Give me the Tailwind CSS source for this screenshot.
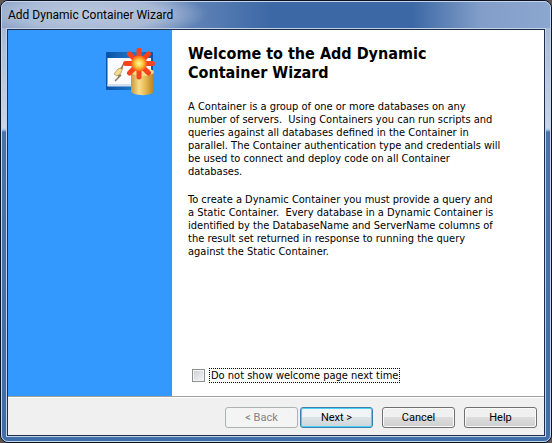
<!DOCTYPE html>
<html lang="en">
<head>
    <meta charset="UTF-8">
    <meta name="viewport" content="width=device-width, initial-scale=1.0">
    <title>Add Dynamic Container Wizard</title>
    <script src="https://cdn.jsdelivr.net/npm/@tailwindcss/browser@4"></script>
</head>
<body class="bg-[#5c5552]">
    <div class="h-screen flex flex-col rounded-lg border border-[#0b1222] bg-[linear-gradient(to_bottom,#9fb2d0_0px,#c9d6e8_127px,#9fc0e4_129px,#4a72aa_131px,#3f6da8_100%)] text-black font-['DejaVu_Sans_Condensed','DejaVu_Sans',sans-serif]">
        <div class="grow flex flex-col rounded-[7px] border border-[#c6d5ea]">

            <!-- Title bar -->
            <header class="h-[26px] shrink-0 flex items-center rounded-t-md px-1.5 bg-[radial-gradient(ellipse_120px_26px_at_85px_12px,#b9c7de_0%,#a9bad6_60%,transparent_100%),linear-gradient(to_right,#7e97bf_0px,#8099c2_130px,#5b80b5_200px,#3c68a5_270px,#3c68a5_410px,#839fc9_480px,#8ba6cf_100%)]">
                <h1 class="text-[12px] leading-4 font-[Roboto,sans-serif]">Add Dynamic Container Wizard</h1>
            </header>

            <main class="grow mx-1 mb-1 flex flex-col border border-[#c3d2e6]">
                <div class="grow flex flex-col border border-[#1b2c4c] bg-[#f0f0f0]">
                    <div class="grow flex border-b border-[#a0a0a0]">
                        <div class="w-[164px] shrink-0 bg-[#3399ff] flex justify-end items-start pt-[18px] pr-4">
                            <svg class="w-[50px] h-[50px]" viewBox="0 0 50 50" aria-hidden="true">
                                <defs>
                                    <linearGradient id="bar" x1="0" y1="0" x2="1" y2="0">
                                        <stop offset="0" stop-color="#0753a8"/>
                                        <stop offset="0.7" stop-color="#267dcd"/>
                                        <stop offset="1" stop-color="#0753a8"/>
                                    </linearGradient>
                                    <linearGradient id="can" x1="0" y1="0" x2="1" y2="0">
                                        <stop offset="0" stop-color="#c9973a"/>
                                        <stop offset="0.35" stop-color="#f9dd8c"/>
                                        <stop offset="0.6" stop-color="#e8bd58"/>
                                        <stop offset="1" stop-color="#b67f1e"/>
                                    </linearGradient>
                                    <radialGradient id="core">
                                        <stop offset="0" stop-color="#fffba0"/>
                                        <stop offset="0.5" stop-color="#ffc93a"/>
                                        <stop offset="1" stop-color="#fa5a16"/>
                                    </radialGradient>
                                </defs>
                                <rect x="0" y="4" width="47" height="38" rx="1" fill="url(#bar)"/>
                                <path d="M1.500 10H45V38H1.500Z" fill="#fafbff"/>
                                <path d="M1.500 36H26V38.500H1.500Z" fill="#d5def0"/>
                                <path d="M12 21L17 19L15 25L11 28L8 26Z" fill="#f3dc9a" stroke="#c9a766" stroke-width="1"/>
                                <path d="M18 15L15 21M12 28L15 27L9 33" fill="none" stroke="#8c7a5c" stroke-width="1.500"/>
                                <path d="M25 24V43C25 48.500 48 48.500 48 43V24Z" fill="url(#can)"/>
                                <ellipse cx="36.500" cy="24" rx="11.500" ry="4" fill="#f9dc8c"/>
                                <g stroke="#f8421c" stroke-width="5" stroke-linecap="round">
                                    <path d="M33 2V29M19.500 15.500H46.500M23.500 6L42.500 25M42.500 6L23.500 25"/>
                                </g>
                                <circle cx="33" cy="15.500" r="8" fill="url(#core)"/>
                            </svg>
                        </div>

                        <div class="grow flex flex-col bg-white pl-4 pr-10 pt-3.5">
                            <h2 class="text-[16px] leading-[19px] font-bold">Welcome to the Add Dynamic<br>Container Wizard</h2>
                            <div class="mt-[18px] flex flex-col gap-[15px] text-[11px] leading-[13px] whitespace-nowrap">
                                <p>A Container is a group of one or more databases on any<br>
                                number of servers.&nbsp; Using Containers you can run scripts and<br>
                                queries against all databases defined in the Container in<br>
                                parallel. The Container authentication type and credentials will<br>
                                be used to connect and deploy code on all Container<br>
                                databases.</p>
                                <p>To create a Dynamic Container you must provide a query and<br>
                                a Static Container.&nbsp; Every database in a Dynamic Container is<br>
                                identified by the DatabaseName and ServerName columns of<br>
                                the result set returned in response to running the query<br>
                                against the Static Container.</p>
                            </div>
                            <div class="mt-auto mb-[13px] ml-1 flex items-center gap-1 text-[11px]">
                                <input id="skipWelcome" type="checkbox" class="appearance-none size-[13px] shrink-0 border border-[#8e8f8f] bg-linear-to-br from-[#cbcfd5] to-[#f6f6f6] outline outline-[#f4f4f4] -outline-offset-2 checked:bg-[#4a72aa]">
                                <label for="skipWelcome" class="border border-dotted border-black px-px leading-[13px] whitespace-nowrap">Do not show welcome page next time</label>
                            </div>
                        </div>
                    </div>

                    <!-- Wizard buttons -->
                    <footer class="h-[38px] shrink-0 flex items-center justify-end gap-[9px] border-t border-white pr-[7px] pb-0.5 pt-1 text-[11px] font-[Roboto,sans-serif]">
                        <div class="flex gap-0.5">
                            <button type="button" disabled class="w-[73px] h-[21px] rounded-[3px] border border-[#adb2b5] bg-[#f4f4f4] text-[#838383] leading-4">&lt; Back</button>
                            <button type="button" class="w-[73px] h-[21px] rounded-[3px] border border-[#3c7fb1] bg-linear-to-b from-[#f0f4f6] from-45% via-[#dce4e8] via-50% to-[#cfd6da] inset-ring inset-ring-[#48d0f5] leading-4">Next &gt;</button>
                        </div>
                        <button type="button" class="w-[73px] h-[21px] rounded-[3px] border border-[#707070] bg-linear-to-b from-[#f0f0f0] from-45% via-[#dddddd] via-50% to-[#cfcfcf] inset-ring inset-ring-[#fafafa] leading-4">Cancel</button>
                        <button type="button" class="w-[73px] h-[21px] rounded-[3px] border border-[#707070] bg-linear-to-b from-[#f0f0f0] from-45% via-[#dddddd] via-50% to-[#cfcfcf] inset-ring inset-ring-[#fafafa] leading-4">Help</button>
                    </footer>
                </div>
            </main>
        </div>
    </div>
</body>
</html>
